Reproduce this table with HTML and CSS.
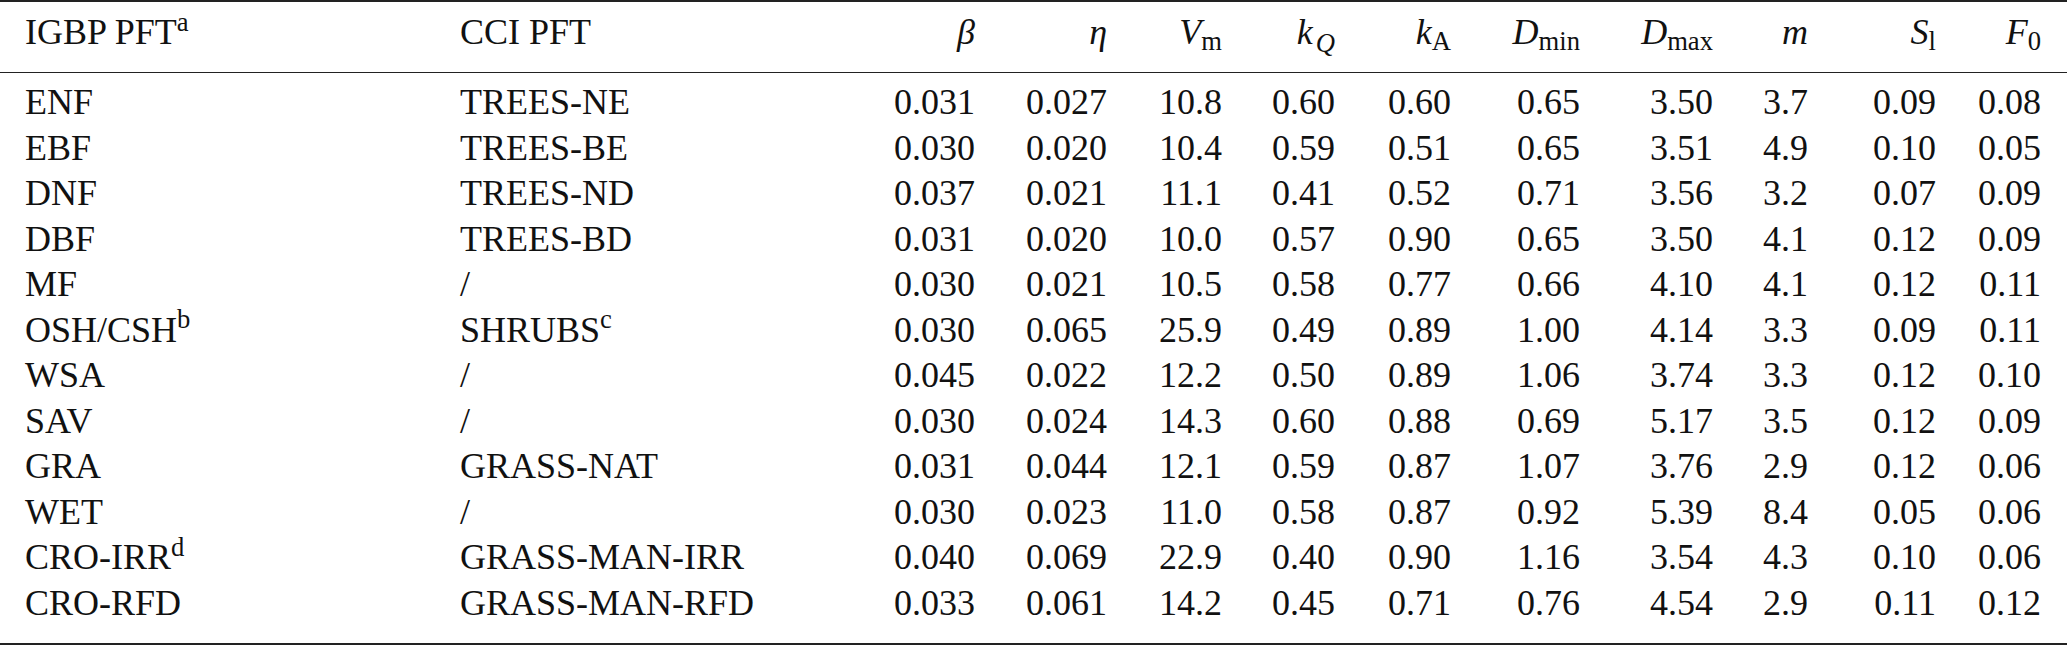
FILE: index.html
```html
<!DOCTYPE html>
<html>
<head>
<meta charset="utf-8">
<link rel="stylesheet" href="styles.css">
</head>
<body>
<div class="table">
  <div class="row head">
    <div class="c l">IGBP PFT<sup>a</sup></div>
    <div class="c l">CCI PFT</div>
    <div class="c"><i>β</i></div>
    <div class="c"><i>η</i></div>
    <div class="c"><i>V</i><sub>m</sub></div>
    <div class="c"><i>k</i><sub class="q"><i>Q</i></sub></div>
    <div class="c"><i>k</i><sub>A</sub></div>
    <div class="c"><i>D</i><sub>min</sub></div>
    <div class="c"><i>D</i><sub>max</sub></div>
    <div class="c"><i>m</i></div>
    <div class="c"><i>S</i><sub>l</sub></div>
    <div class="c"><i>F</i><sub>0</sub></div>
  </div>
  <div class="body">
    <div class="row"><div class="c l">ENF</div><div class="c l">TREES-NE</div><div class="c">0.031</div><div class="c">0.027</div><div class="c">10.8</div><div class="c">0.60</div><div class="c">0.60</div><div class="c">0.65</div><div class="c">3.50</div><div class="c">3.7</div><div class="c">0.09</div><div class="c">0.08</div></div>
    <div class="row"><div class="c l">EBF</div><div class="c l">TREES-BE</div><div class="c">0.030</div><div class="c">0.020</div><div class="c">10.4</div><div class="c">0.59</div><div class="c">0.51</div><div class="c">0.65</div><div class="c">3.51</div><div class="c">4.9</div><div class="c">0.10</div><div class="c">0.05</div></div>
    <div class="row"><div class="c l">DNF</div><div class="c l">TREES-ND</div><div class="c">0.037</div><div class="c">0.021</div><div class="c">11.1</div><div class="c">0.41</div><div class="c">0.52</div><div class="c">0.71</div><div class="c">3.56</div><div class="c">3.2</div><div class="c">0.07</div><div class="c">0.09</div></div>
    <div class="row"><div class="c l">DBF</div><div class="c l">TREES-BD</div><div class="c">0.031</div><div class="c">0.020</div><div class="c">10.0</div><div class="c">0.57</div><div class="c">0.90</div><div class="c">0.65</div><div class="c">3.50</div><div class="c">4.1</div><div class="c">0.12</div><div class="c">0.09</div></div>
    <div class="row"><div class="c l">MF</div><div class="c l">/</div><div class="c">0.030</div><div class="c">0.021</div><div class="c">10.5</div><div class="c">0.58</div><div class="c">0.77</div><div class="c">0.66</div><div class="c">4.10</div><div class="c">4.1</div><div class="c">0.12</div><div class="c">0.11</div></div>
    <div class="row"><div class="c l">OSH/CSH<sup>b</sup></div><div class="c l">SHRUBS<sup>c</sup></div><div class="c">0.030</div><div class="c">0.065</div><div class="c">25.9</div><div class="c">0.49</div><div class="c">0.89</div><div class="c">1.00</div><div class="c">4.14</div><div class="c">3.3</div><div class="c">0.09</div><div class="c">0.11</div></div>
    <div class="row"><div class="c l">WSA</div><div class="c l">/</div><div class="c">0.045</div><div class="c">0.022</div><div class="c">12.2</div><div class="c">0.50</div><div class="c">0.89</div><div class="c">1.06</div><div class="c">3.74</div><div class="c">3.3</div><div class="c">0.12</div><div class="c">0.10</div></div>
    <div class="row"><div class="c l">SAV</div><div class="c l">/</div><div class="c">0.030</div><div class="c">0.024</div><div class="c">14.3</div><div class="c">0.60</div><div class="c">0.88</div><div class="c">0.69</div><div class="c">5.17</div><div class="c">3.5</div><div class="c">0.12</div><div class="c">0.09</div></div>
    <div class="row"><div class="c l">GRA</div><div class="c l">GRASS-NAT</div><div class="c">0.031</div><div class="c">0.044</div><div class="c">12.1</div><div class="c">0.59</div><div class="c">0.87</div><div class="c">1.07</div><div class="c">3.76</div><div class="c">2.9</div><div class="c">0.12</div><div class="c">0.06</div></div>
    <div class="row"><div class="c l">WET</div><div class="c l">/</div><div class="c">0.030</div><div class="c">0.023</div><div class="c">11.0</div><div class="c">0.58</div><div class="c">0.87</div><div class="c">0.92</div><div class="c">5.39</div><div class="c">8.4</div><div class="c">0.05</div><div class="c">0.06</div></div>
    <div class="row"><div class="c l">CRO-IRR<sup>d</sup></div><div class="c l">GRASS-MAN-IRR</div><div class="c">0.040</div><div class="c">0.069</div><div class="c">22.9</div><div class="c">0.40</div><div class="c">0.90</div><div class="c">1.16</div><div class="c">3.54</div><div class="c">4.3</div><div class="c">0.10</div><div class="c">0.06</div></div>
    <div class="row"><div class="c l">CRO-RFD</div><div class="c l">GRASS-MAN-RFD</div><div class="c">0.033</div><div class="c">0.061</div><div class="c">14.2</div><div class="c">0.45</div><div class="c">0.71</div><div class="c">0.76</div><div class="c">4.54</div><div class="c">2.9</div><div class="c">0.11</div><div class="c">0.12</div></div>
  </div>
</div>
</body>
</html>
```
FILE: styles.css
```css
html, body {
  margin: 0;
  padding: 0;
  background: #ffffff;
}
body {
  font-family: "Liberation Serif", "Times New Roman", serif;
  font-size: 36px;
  color: #111111;
  width: 2067px;
  height: 646px;
  overflow: hidden;
}
.table {
  width: 2067px;
  border-top: 2px solid #222222;
  border-bottom: 2px solid #222222;
  box-sizing: border-box;
}
.row {
  display: grid;
  grid-template-columns: 435px 380px 135px 132px 115px 113px 116px 129px 133px 95px 128px 105px;
  padding: 0 26px 0 25px;
  line-height: 45.5px;
  height: 45.5px;
}
.head {
  padding-top: 8px;
  padding-bottom: 16px;
  border-bottom: 1.5px solid #222222;
}
.body {
  padding-top: 7.5px;
  padding-bottom: 17px;
}
.c {
  text-align: right;
  white-space: nowrap;
}
.c.l {
  text-align: left;
}
sup, sub {
  font-size: 0.74em;
  line-height: 0;
  position: relative;
  vertical-align: baseline;
}
sup {
  top: -0.5em;
}
sub {
  top: 0.22em;
}
sub.q {
  top: 0.3em;
  margin-left: 3px;
}
i {
  font-style: italic;
}
```
